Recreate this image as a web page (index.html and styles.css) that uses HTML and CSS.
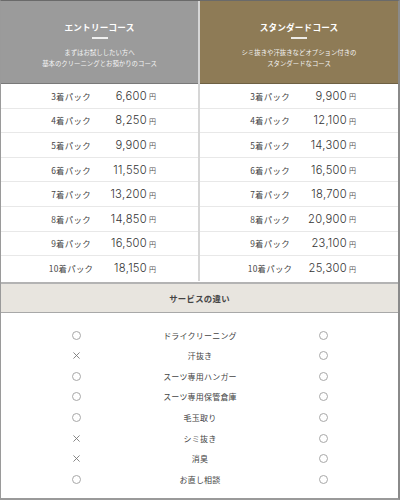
FILE: index.html
```html
<!DOCTYPE html>
<html lang="ja">
<head>
<meta charset="utf-8">
<link rel="stylesheet" href="styles.css">
</head>
<body>
<div class="wrap">
  <div class="courses">
    <div class="course">
      <div class="head head-entry">
        <div class="title">エントリーコース</div>
        <div class="rule"></div>
        <div class="sub">まずはお試ししたい方へ<br>基本のクリーニングとお預かりのコース</div>
      </div>
      <div class="rows">
        <div class="row"><span class="label">3着パック</span><span class="price">6,600</span><span class="yen">円</span></div>
        <div class="row"><span class="label">4着パック</span><span class="price">8,250</span><span class="yen">円</span></div>
        <div class="row"><span class="label">5着パック</span><span class="price">9,900</span><span class="yen">円</span></div>
        <div class="row"><span class="label">6着パック</span><span class="price">11,550</span><span class="yen">円</span></div>
        <div class="row"><span class="label">7着パック</span><span class="price">13,200</span><span class="yen">円</span></div>
        <div class="row"><span class="label">8着パック</span><span class="price">14,850</span><span class="yen">円</span></div>
        <div class="row"><span class="label">9着パック</span><span class="price">16,500</span><span class="yen">円</span></div>
        <div class="row"><span class="label">10着パック</span><span class="price">18,150</span><span class="yen">円</span></div>
      </div>
    </div>
    <div class="course">
      <div class="head head-std">
        <div class="title">スタンダードコース</div>
        <div class="rule"></div>
        <div class="sub">シミ抜きや汗抜きなどオプション付きの<br>スタンダードなコース</div>
      </div>
      <div class="rows">
        <div class="row"><span class="label">3着パック</span><span class="price">9,900</span><span class="yen">円</span></div>
        <div class="row"><span class="label">4着パック</span><span class="price">12,100</span><span class="yen">円</span></div>
        <div class="row"><span class="label">5着パック</span><span class="price">14,300</span><span class="yen">円</span></div>
        <div class="row"><span class="label">6着パック</span><span class="price">16,500</span><span class="yen">円</span></div>
        <div class="row"><span class="label">7着パック</span><span class="price">18,700</span><span class="yen">円</span></div>
        <div class="row"><span class="label">8着パック</span><span class="price">20,900</span><span class="yen">円</span></div>
        <div class="row"><span class="label">9着パック</span><span class="price">23,100</span><span class="yen">円</span></div>
        <div class="row"><span class="label">10着パック</span><span class="price">25,300</span><span class="yen">円</span></div>
      </div>
    </div>
  </div>
  <div class="band">サービスの違い</div>
  <div class="compare">
    <div class="crow"><span class="mark"><i class="circle"></i></span><span class="svc">ドライクリーニング</span><span class="mark"><i class="circle"></i></span></div>
    <div class="crow"><span class="mark"><svg class="cross" viewBox="0 0 8 8"><path d="M0.5 0.5L7.5 7.5M7.5 0.5L0.5 7.5"/></svg></span><span class="svc">汗抜き</span><span class="mark"><i class="circle"></i></span></div>
    <div class="crow"><span class="mark"><i class="circle"></i></span><span class="svc">スーツ専用ハンガー</span><span class="mark"><i class="circle"></i></span></div>
    <div class="crow"><span class="mark"><i class="circle"></i></span><span class="svc">スーツ専用保管倉庫</span><span class="mark"><i class="circle"></i></span></div>
    <div class="crow"><span class="mark"><i class="circle"></i></span><span class="svc">毛玉取り</span><span class="mark"><i class="circle"></i></span></div>
    <div class="crow"><span class="mark"><svg class="cross" viewBox="0 0 8 8"><path d="M0.5 0.5L7.5 7.5M7.5 0.5L0.5 7.5"/></svg></span><span class="svc">シミ抜き</span><span class="mark"><i class="circle"></i></span></div>
    <div class="crow"><span class="mark"><svg class="cross" viewBox="0 0 8 8"><path d="M0.5 0.5L7.5 7.5M7.5 0.5L0.5 7.5"/></svg></span><span class="svc">消臭</span><span class="mark"><i class="circle"></i></span></div>
    <div class="crow"><span class="mark"><i class="circle"></i></span><span class="svc">お直し相談</span><span class="mark"><i class="circle"></i></span></div>
  </div>
</div>
</body>
</html>
```
FILE: styles.css
```css
* { box-sizing: border-box; margin: 0; padding: 0; }
html, body { background: #fff; }
body {
  margin: 0;
  font-family: "Noto Sans CJK JP", "Noto Sans", sans-serif;
  color: #333;
}
.wrap {
  width: 400px;
  height: 500px;
  border: 1px solid #9a9a9a;
  border-right: 2px solid #8a8a8a;
  border-top: 1px solid #6a6a6a;
  border-bottom: 2px solid #9a9a9a;
  display: flex;
  flex-direction: column;
}
.courses {
  display: grid;
  grid-template-columns: 199px 1fr;
}
.course:first-child { border-right: 2px solid #d6d6d6; }
.head {
  height: 83px;
  border-bottom: 1px solid rgba(0,0,0,0.22);
  display: flex;
  flex-direction: column;
  align-items: center;
  padding-top: 20px;
  color: #fff;
}
.head-entry { background: #9b9b9b; }
.head-std { background: #8e7b56; }
.title {
  font-size: 8.6px;
  font-weight: 700;
  line-height: 12px;
  letter-spacing: 0.2px;
}
.rule {
  width: 16px;
  height: 1.5px;
  background: rgba(255,255,255,0.85);
  margin-top: 4px;
}
.sub {
  margin-top: 8px;
  font-size: 6.4px;
  line-height: 11px;
  text-align: center;
  color: #f4f4f4;
}
.rows { display: flex; flex-direction: column; }
.row {
  height: 24.6px;
  border-bottom: 1px solid #e8e8e8;
  display: flex;
  align-items: center;
  padding-left: 40px;
}
.row:last-child { border-bottom: none; }
.label {
  width: 60px;
  text-align: center;
  font-size: 8.4px;
  color: #444;
  letter-spacing: 0.3px;
}
.price {
  width: 46px;
  text-align: right;
  font-family: Inter, "DejaVu Sans", sans-serif;
  font-size: 11.2px;
  font-weight: 300;
  letter-spacing: 0.3px;
  color: #333;
}
.course + .course .price { width: 47px; }
.yen {
  font-size: 7px;
  color: #555;
  margin-left: 2px;
  margin-top: 1px;
}
.band {
  height: 31px;
  margin-top: 1px;
  border-top: 2px solid #b3b3b3;
  border-bottom: 1px solid #a8a8a8;
  background: #e8e5df;
  display: flex;
  align-items: center;
  justify-content: center;
  font-size: 8.4px;
  font-weight: 700;
  color: #444;
  letter-spacing: 0.3px;
}
.compare {
  padding-top: 12px;
  display: flex;
  flex-direction: column;
}
.crow {
  height: 20.6px;
  display: grid;
  grid-template-columns: 151px 96px 1fr;
  align-items: center;
}
.mark {
  display: flex;
  justify-content: center;
  align-items: center;
}
.circle {
  display: block;
  width: 9px;
  height: 9px;
  border: 1px solid #a8a8a8;
  border-radius: 50%;
}
.cross {
  width: 7px;
  height: 7px;
  stroke: #777;
  stroke-width: 1;
  fill: none;
}
.svc {
  text-align: center;
  font-size: 8px;
  color: #444;
  letter-spacing: 0.2px;
}
```
